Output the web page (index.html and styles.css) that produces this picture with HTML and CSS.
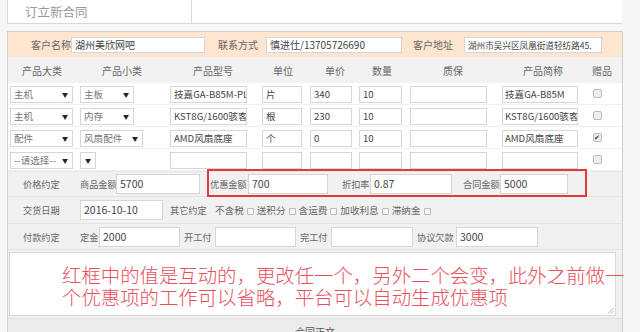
FILE: index.html
```html
<!DOCTYPE html>
<html lang="zh-CN">
<head>
    <meta charset="UTF-8">
    <title>订立新合同</title>
    <link rel="stylesheet" href="styles.css">
</head>
<body>
    <div class="topbar">
        <div class="title">订立新合同</div>
        <div class="topbar-rest"></div>
    </div>

    <div class="panel">
        <!-- 客户信息 -->
        <div class="cust-row">
            <span class="lbl lbl-c1">客户名称</span>
            <div class="inp inp-name">湖州美欣网吧</div>
            <span class="lbl lbl-c2">联系方式</span>
            <div class="inp inp-phone">慎进仕/13705726690</div>
            <span class="lbl lbl-c3">客户地址</span>
            <div class="inp inp-addr">湖州市吴兴区凤凰街道轻纺路45.</div>
        </div>

        <!-- 产品表头 -->
        <div class="thead">
            <span class="th th1">产品大类</span>
            <span class="th th2">产品小类</span>
            <span class="th th3">产品型号</span>
            <span class="th th4">单位</span>
            <span class="th th5">单价</span>
            <span class="th th6">数量</span>
            <span class="th th7">质保</span>
            <span class="th th8">产品简称</span>
            <span class="th th9">赠品</span>
        </div>

        <div class="prow">
            <div class="sel sel1">主机<i>▼</i></div>
            <div class="sel sel2">主板<i>▼</i></div>
            <div class="inp c-model">技嘉GA-B85M-PLUS</div>
            <div class="inp c-unit">片</div>
            <div class="inp c-price">340</div>
            <div class="inp c-qty">10</div>
            <div class="inp c-warr"></div>
            <div class="inp c-short">技嘉GA-B85M</div>
            <div class="c-gift"><span class="cb"></span></div>
        </div>
        <div class="prow">
            <div class="sel sel1">主机<i>▼</i></div>
            <div class="sel sel2">内存<i>▼</i></div>
            <div class="inp c-model">KST8G/1600骇客神条</div>
            <div class="inp c-unit">根</div>
            <div class="inp c-price">230</div>
            <div class="inp c-qty">10</div>
            <div class="inp c-warr"></div>
            <div class="inp c-short">KST8G/1600骇客</div>
            <div class="c-gift"><span class="cb"></span></div>
        </div>
        <div class="prow">
            <div class="sel sel1">配件<i>▼</i></div>
            <div class="sel sel2 wide">风扇配件<i>▼</i></div>
            <div class="inp c-model">AMD风扇底座</div>
            <div class="inp c-unit">个</div>
            <div class="inp c-price">0</div>
            <div class="inp c-qty">10</div>
            <div class="inp c-warr"></div>
            <div class="inp c-short">AMD风扇底座</div>
            <div class="c-gift"><span class="cb checked">✔</span></div>
        </div>
        <div class="prow">
            <div class="sel sel1">--请选择--<i>▼</i></div>
            <div class="sel sel2 tiny"><i>▼</i></div>
            <div class="inp c-model"></div>
            <div class="inp c-unit"></div>
            <div class="inp c-price"></div>
            <div class="inp c-qty"></div>
            <div class="inp c-warr"></div>
            <div class="inp c-short"></div>
            <div class="c-gift"><span class="cb"></span></div>
        </div>

        <!-- 价格约定 -->
        <div class="frow price-row">
            <span class="rlbl">价格约定</span>
            <span class="flbl m-goods">商品金额</span>
            <div class="inp f-goods">5700</div>
            <span class="flbl m-disc">优惠金额</span>
            <div class="inp f-disc">700</div>
            <span class="flbl m-rate">折扣率</span>
            <div class="inp f-rate">0.87</div>
            <span class="flbl m-total">合同金额</span>
            <div class="inp f-total">5000</div>
            <div class="redbox"></div>
        </div>

        <div class="frow date-row">
            <span class="rlbl">交货日期</span>
            <div class="inp f-date">2016-10-10</div>
            <span class="flbl m-other">其它约定</span>
            <span class="opt o1">不含税<span class="cb sm"></span></span>
            <span class="opt">送积分<span class="cb sm"></span></span>
            <span class="opt">含运费<span class="cb sm"></span></span>
            <span class="opt">加收利息<span class="cb sm"></span></span>
            <span class="opt">滞纳金<span class="cb sm"></span></span>
        </div>

        <div class="frow pay-row">
            <span class="rlbl">付款约定</span>
            <span class="flbl m-dep">定金</span>
            <div class="inp f-dep">2000</div>
            <span class="flbl m-start">开工付</span>
            <div class="inp f-start"></div>
            <span class="flbl m-end">完工付</span>
            <div class="inp f-end"></div>
            <span class="flbl m-owe">协议欠款</span>
            <div class="inp f-owe">3000</div>
        </div>

        <div class="note-wrap">
            <div class="note">
                <span class="note-line">红框中的值是互动的，更改任一个，另外二个会变，此外之前做一</span>
                <span class="note-line">个优惠项的工作可以省略，平台可以自动生成优惠项</span>
                <svg class="grip" width="7" height="7" viewBox="0 0 7 7">
                    <path d="M6.5 1 L1 6.5 M6.5 4 L4 6.5" stroke="#999" stroke-width="0.8" fill="none"/>
                </svg>
            </div>
        </div>

        <div class="foot">合同正文</div>
    </div>
</body>
</html>
```

FILE: styles.css
```css
body {
    margin: 0;
    background-color: #f6f6f6;
    font-family: "Noto Sans CJK SC", "Liberation Sans", sans-serif;
    font-size: 10px;
    color: #555;
    height: 332px;
    overflow: hidden;
}
.topbar {
    display: flex;
    height: 23px;
    margin: -1px 18px 0 7px;
    background-color: #fff;
    border-bottom: 1px solid #d8d8d8;
    border-top: 1px solid #d8d8d8;
}
.title {
    width: 166px;
    padding-left: 17px;
    border-left: 1px solid #d8d8d8;
    border-right: 1px solid #d8d8d8;
    font-size: 12.5px;
    line-height: 23px;
    color: #999;
}
.topbar-rest {
    flex: 1;
}
.panel {
    margin: 7px 0 0 7px;
    width: 614px;
    border: 1px solid #cfcfcf;
    border-bottom: none;
    background-color: #fff;
}

/* поля ввода */
.inp {
    box-sizing: border-box;
    height: 17px;
    border: 1px solid #d6d6d6;
    background-color: #fff;
    color: #444;
    font-size: 10px;
    line-height: 15px;
    padding-left: 3px;
    white-space: nowrap;
    overflow: hidden;
}
.lbl, .flbl, .rlbl, .th, .opt {
    white-space: nowrap;
    color: #666;
}
.flbl, .rlbl {
    font-size: 9.2px;
}
.opt {
    font-size: 9.6px;
}

.cust-row {
    display: flex;
    align-items: center;
    height: 25px;
    background-color: #fde5cf;
}
.cust-row .inp {
    height: 16px;
    line-height: 14px;
}
.lbl-c1 { margin-left: 23px; width: 40px; }
.inp-name { width: 134px; }
.lbl-c2 { margin-left: 13px; width: 40px; }
.inp-phone { margin-left: 8px; width: 136px; }
.lbl-c3 { margin-left: 11px; width: 40px; }
.inp-addr { margin-left: 11px; width: 138px; font-size: 8.6px; }

.thead {
    display: flex;
    align-items: center;
    height: 26px;
    background-color: #f2f2f2;
}
.th { text-align: center; }
.th1 { width: 68px; }
.th2 { width: 92px; }
.th3 { width: 90px; }
.th4 { width: 50px; }
.th5 { width: 54px; }
.th6 { width: 40px; }
.th7 { width: 102px; }
.th8 { width: 78px; }
.th9 { width: 40px; }

.prow {
    display: flex;
    align-items: flex-start;
    box-sizing: border-box;
    height: 22px;
    padding: 3px 0 0 2px;
    border-bottom: 1px solid #f0f0f0;
}
.prow .inp {
    font-size: 9.6px;
}
.sel {
    box-sizing: border-box;
    position: relative;
    height: 17px;
    border: 1px solid #d6d6d6;
    color: #777;
    font-size: 9.6px;
    line-height: 15px;
    padding-left: 3px;
    white-space: nowrap;
}
.sel i {
    position: absolute;
    right: 4px;
    top: 0;
    font-style: normal;
    font-size: 6px;
    color: #222;
}
.sel1 { width: 63px; }
.sel2 { width: 54px; margin-left: 7px; }
.sel2.wide { width: 63px; }
.sel2.tiny { width: 16px; }
.c-model { width: 77px; margin-left: 36px; }
.prow .sel2.wide + .c-model { margin-left: 27px; }
.prow .sel2.tiny + .c-model { margin-left: 74px; }
.c-unit { width: 40px; margin-left: 15px; }
.c-price { width: 42px; margin-left: 8px; }
.c-qty { width: 43px; margin-left: 7px; }
.c-warr { width: 77px; margin-left: 8px; }
.c-short { width: 76px; margin-left: 15px; padding-left: 2px; }
.c-gift {
    width: 38px;
    display: flex;
    justify-content: center;
    padding-top: 3px;
}
.cb {
    display: inline-block;
    box-sizing: border-box;
    width: 9px;
    height: 9px;
    border: 1px solid #bbb;
    border-radius: 2px;
    background-color: #eee;
    font-size: 7px;
    line-height: 7px;
    text-align: center;
    color: #333;
}
.cb.sm {
    width: 7px;
    height: 7px;
    margin-left: 3px;
    border-radius: 1px;
    background-color: #f8f8f8;
    vertical-align: -1px;
}

/* строки договора */
.frow {
    display: flex;
    align-items: center;
    box-sizing: border-box;
    background-color: #f1f1f1;
    border-bottom: 1px solid #e3e3e3;
    position: relative;
}
.frow .inp {
    height: 20px;
    line-height: 18px;
    font-size: 10.5px;
}
.rlbl {
    margin-left: 15px;
    width: 40px;
}
.price-row { height: 26px; border-top: 1px solid #e8e8e8; }
.date-row { height: 27px; }
.pay-row { height: 26px; }

.m-goods { margin-left: 17px; width: 36px; }
.f-goods { width: 84px; }
.m-disc { margin-left: 10px; width: 38px; }
.f-disc { width: 80px; }
.m-rate { margin-left: 14px; width: 28px; }
.f-rate { width: 82px; }
.m-total { margin-left: 11px; width: 37px; }
.f-total { width: 68px; }

.redbox {
    position: absolute;
    left: 199px;
    top: -3px;
    width: 380px;
    height: 28px;
    box-sizing: border-box;
    border: 2px solid #e23a3a;
}

.f-date { margin-left: 17px; width: 83px; }
.m-other { margin-left: 7px; width: 36px; }
.opt { margin-left: 3px; }
.o1 { margin-left: 9px; }

.m-dep { margin-left: 17px; width: 19px; }
.f-dep { width: 81px; }
.m-start { margin-left: 4px; width: 31px; }
.f-start { width: 81px; }
.m-end { margin-left: 4px; width: 31px; }
.f-end { width: 82px; }
.m-owe { margin-left: 4px; width: 39px; }
.f-owe { width: 82px; }

.note-wrap {
    background-color: #f1f1f1;
    padding: 2px 6px 2px 1px;
    border-bottom: 1px solid #e0e0e0;
}
.note {
    position: relative;
    box-sizing: border-box;
    height: 64px;
    background-color: #fff;
    border: 1px solid #d8d8d8;
    padding: 11px 0 0 52px;
}
.note-line {
    display: block;
    white-space: nowrap;
    font-size: 19.4px;
    line-height: 22px;
    color: #e6505c;
    font-weight: 300;
}
.grip {
    position: absolute;
    right: 1px;
    bottom: 1px;
}
.foot {
    height: 14px;
    background-color: #ececec;
    text-align: center;
    padding-top: 6px;
    line-height: 14px;
    color: #555;
}
```
